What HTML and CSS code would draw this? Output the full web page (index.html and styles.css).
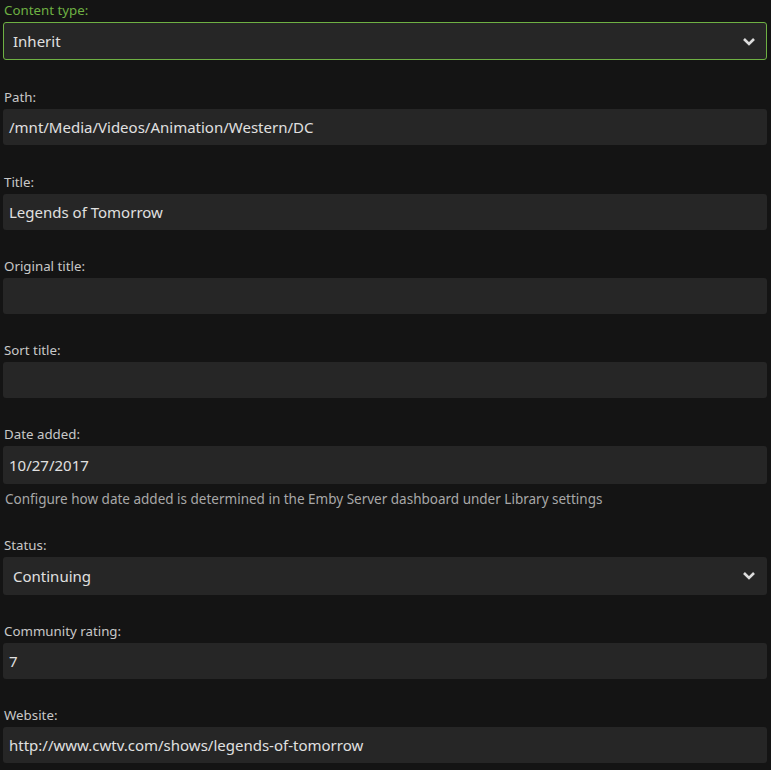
FILE: index.html
```html
<!DOCTYPE html>
<html>
<head>
<meta charset="utf-8">
<link rel="stylesheet" href="styles.css">
</head>
<body>
<div class="form">
  <div class="field field-first">
    <label class="label label-focus">Content type:</label>
    <div class="select select-focus"><span>Inherit</span><svg class="chev" viewBox="0 0 14 9" width="14" height="9"><path d="M2 2 L7 7 L12 2" fill="none" stroke="#dcdcdc" stroke-width="2.6"/></svg></div>
  </div>
  <div class="field">
    <label class="label">Path:</label>
    <div class="input">/mnt/Media/Videos/Animation/Western/DC</div>
  </div>
  <div class="field">
    <label class="label">Title:</label>
    <div class="input">Legends of Tomorrow</div>
  </div>
  <div class="field">
    <label class="label">Original title:</label>
    <div class="input"></div>
  </div>
  <div class="field">
    <label class="label">Sort title:</label>
    <div class="input"></div>
  </div>
  <div class="field">
    <label class="label">Date added:</label>
    <div class="input input-tall">10/27/2017</div>
    <div class="desc">Configure how date added is determined in the Emby Server dashboard under Library settings</div>
  </div>
  <div class="field">
    <label class="label">Status:</label>
    <div class="select"><span>Continuing</span><svg class="chev" viewBox="0 0 14 9" width="14" height="9"><path d="M2 2 L7 7 L12 2" fill="none" stroke="#dcdcdc" stroke-width="2.6"/></svg></div>
  </div>
  <div class="field">
    <label class="label">Community rating:</label>
    <div class="input">7</div>
  </div>
  <div class="field">
    <label class="label">Website:</label>
    <div class="input">http://www.cwtv.com/shows/legends-of-tomorrow</div>
  </div>
</div>
</body>
</html>
```
FILE: styles.css
```css
html, body {
  margin: 0;
  padding: 0;
  background: #141414;
  height: 100%;
  overflow: hidden;
}
body {
  font-family: "Noto Sans", "Open Sans", sans-serif;
}
.form {
  display: flex;
  flex-direction: column;
  gap: 27.3px;
  padding: 1px 4px 0 3px;
}
.field {
  display: flex;
  flex-direction: column;
}
.field-first {
  margin-bottom: 1px;
}
.label {
  display: block;
  font-size: 13.3px;
  line-height: 18px;
  height: 18px;
  margin-bottom: 3px;
  padding-left: 1px;
  color: #c8c8c8;
}
.label-focus {
  color: #6eb043;
}
.input, .select {
  box-sizing: border-box;
  height: 36px;
  background: #262626;
  border-radius: 3px;
  color: #e0e0e0;
  font-size: 15px;
  line-height: 36px;
  padding-left: 6px;
  white-space: nowrap;
}
.input-tall {
  height: 38px;
  line-height: 38px;
}
.select {
  height: 38px;
  padding-left: 10px;
  padding-right: 11px;
  display: flex;
  align-items: center;
  justify-content: space-between;
  line-height: 20px;
}
.select-focus {
  height: 38px;
  border: 1px solid #6eb043;
  padding-left: 9px;
  padding-right: 10px;
}
.chev {
  display: block;
}
.desc {
  font-size: 13.5px;
  line-height: 18px;
  color: #a8a8a8;
  margin-top: 6px;
  padding-left: 2px;
  margin-bottom: 0;
}
```
